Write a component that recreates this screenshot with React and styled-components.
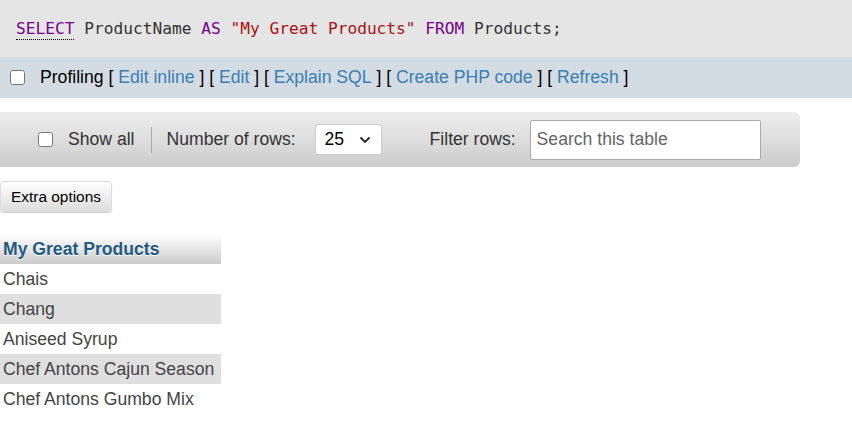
import React from 'react';
import styled, { createGlobalStyle } from 'styled-components';

const GlobalStyle = createGlobalStyle`
  html, body { margin: 0; padding: 0; background: #fff; }
  body { font-family: "Liberation Sans", Arial, sans-serif; font-size: 17.6px; color: #444; }
`;

const SqlBox = styled.div`
  background: #e5e5e5;
  height: 57px;
  display: flex;
  align-items: center;
  padding-left: 16px;
`;

const Code = styled.code`
  font-family: "DejaVu Sans Mono", "Liberation Mono", monospace;
  font-size: 16.2px;
  color: #333;
  white-space: pre;
`;

const Kw = styled.span`
  color: #770088;
  ${(p) => p.$dotted && 'border-bottom: 1px dotted #000; padding-bottom: 1px;'}
`;

const Str = styled.span`
  color: #aa1111;
`;

const ProfilingBar = styled.div`
  background: #d3dce3;
  height: 41px;
  display: flex;
  align-items: center;
  padding-left: 10px;
  color: #000;
  white-space: pre;
`;

const Check = styled.input.attrs({ type: 'checkbox' })`
  width: 15px;
  height: 15px;
  margin: 0 15px 0 0;
`;

const ALink = styled.a`
  color: #3a7fb3;
  text-decoration: none;
`;

const Toolbar = styled.div`
  margin-top: 14px;
  width: 800px;
  height: 55px;
  box-sizing: border-box;
  border-radius: 0 6px 6px 0;
  background: linear-gradient(#eeeeee, #cccccc);
  display: flex;
  align-items: center;
  padding-left: 38px;
  color: #333;
`;

const Sep = styled.span`
  width: 1px;
  height: 26px;
  background: #aaa;
  margin: 0 15px 0 16px;
`;

const Select = styled.div`
  margin-left: 19px;
  width: 67px;
  height: 31px;
  box-sizing: border-box;
  background: #fff;
  border: 1px solid #ccc;
  border-radius: 3px;
  display: flex;
  align-items: center;
  justify-content: space-between;
  padding: 0 10px 0 9px;
  color: #000;
`;

const FilterLabel = styled.span`
  margin-left: 48px;
`;

const Search = styled.input`
  margin-left: 14px;
  width: 231px;
  height: 40px;
  box-sizing: border-box;
  border: 1px solid #aaa;
  border-radius: 2px;
  padding: 0 6px;
  font-family: "Liberation Sans", Arial, sans-serif;
  font-size: 17.6px;
  color: #333;
  &::placeholder { color: #666; }
`;

const ExtraButton = styled.button`
  margin-top: 14px;
  display: block;
  width: 112px;
  height: 31px;
  border: 1px solid #ddd;
  border-radius: 4px;
  background: linear-gradient(#ffffff, #dddddd);
  font-family: "Liberation Sans", Arial, sans-serif;
  font-size: 15.4px;
  color: #000;
  padding: 0;
  box-shadow: 0 1px 1px #ccc;
`;

const Table = styled.table`
  margin-top: 22px;
  border-collapse: collapse;
  width: 221px;
`;

const Th = styled.th`
  height: 30px;
  box-sizing: border-box;
  text-align: left;
  padding: 1px 3px 0;
  font-weight: bold;
  color: #235a81;
  text-shadow: 0 1px 0 #fff;
  background: linear-gradient(#ffffff, #cccccc);
`;

const Td = styled.td`
  height: 30px;
  box-sizing: border-box;
  padding: 1px 3px 0;
  white-space: nowrap;
  color: #444;
  background: ${(p) => (p.$odd ? '#dfdfdf' : '#fff')};
`;

const rows = ['Chais', 'Chang', 'Aniseed Syrup', 'Chef Antons Cajun Season', 'Chef Antons Gumbo Mix'];

export default function App() {
  return (
    <>
      <GlobalStyle />
      <SqlBox>
        <Code>
          <Kw $dotted>SELECT</Kw>{' ProductName '}<Kw>AS</Kw>{' '}<Str>"My Great Products"</Str>{' '}<Kw>FROM</Kw>{' Products;'}
        </Code>
      </SqlBox>
      <ProfilingBar>
        <Check />
        {'Profiling [ '}<ALink href="#">Edit inline</ALink>{' ] [ '}<ALink href="#">Edit</ALink>{' ] [ '}<ALink href="#">Explain SQL</ALink>{' ] [ '}<ALink href="#">Create PHP code</ALink>{' ] [ '}<ALink href="#">Refresh</ALink>{' ]'}
      </ProfilingBar>
      <Toolbar>
        <Check />
        <span>Show all</span>
        <Sep />
        <span>Number of rows:</span>
        <Select>
          <span>25</span>
          <svg width="12" height="8" viewBox="0 0 12 8">
            <path d="M1.5 1.5 L6 6 L10.5 1.5" fill="none" stroke="#222" strokeWidth="1.8" />
          </svg>
        </Select>
        <FilterLabel>Filter rows:</FilterLabel>
        <Search placeholder="Search this table" />
      </Toolbar>
      <ExtraButton>Extra options</ExtraButton>
      <Table>
        <thead>
          <tr><Th>My Great Products</Th></tr>
        </thead>
        <tbody>
          {rows.map((r, i) => (
            <tr key={r}><Td $odd={i % 2 === 1}>{r}</Td></tr>
          ))}
        </tbody>
      </Table>
    </>
  );
}
